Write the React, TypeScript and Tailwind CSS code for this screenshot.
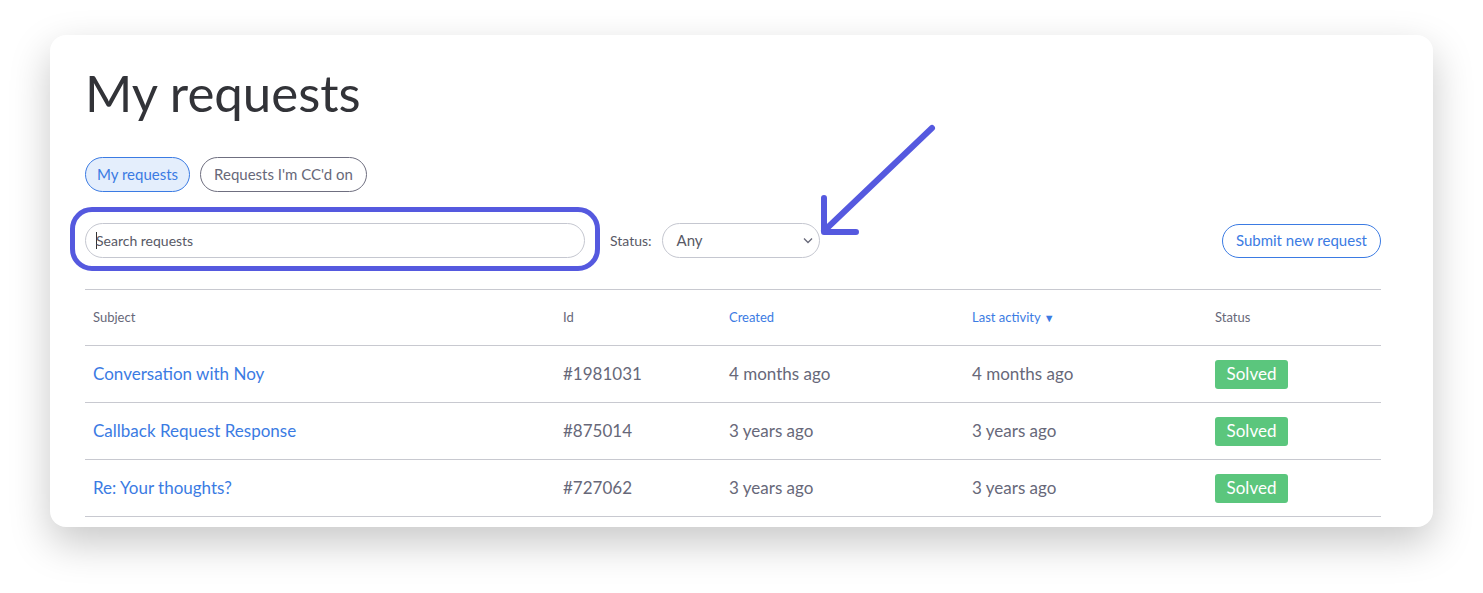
import React from "react";

const rows = [
  { subject: "Conversation with Noy", id: "#1981031", created: "4 months ago", last: "4 months ago" },
  { subject: "Callback Request Response", id: "#875014", created: "3 years ago", last: "3 years ago" },
  { subject: "Re: Your thoughts?", id: "#727062", created: "3 years ago", last: "3 years ago" },
];

const grid = "grid grid-cols-[470px_166px_243px_243px_1fr] items-center";

export default function App() {
  return (
    <div className="min-h-[593px] w-full bg-white pt-[35px] px-[50px] font-['Lato','Liberation_Sans',sans-serif]">
      <div className="relative rounded-[16px] bg-white pl-[35px] pr-[52px] pt-[28px] h-[492px] shadow-[0_16px_40px_rgba(0,0,0,0.22)]">
        <h1 className="text-[51px] leading-[60px] text-[#323338] font-normal">My requests</h1>

        <div className="mt-[34px] flex gap-[10px]">
          <button className="h-[35px] rounded-full border border-[#3b7be3] bg-[#e4eefc] px-[11px] text-[15px] text-[#3b7be3]">
            My requests
          </button>
          <button className="h-[35px] rounded-full border border-[#6f6f80] bg-white px-[13px] text-[15px] text-[#676879]">
            Requests I'm CC'd on
          </button>
        </div>

        <div className="mt-[31px] flex items-center">
          <div className="relative w-[500px]">
            <div className="pointer-events-none absolute -left-[15px] -right-[15px] -top-[16px] -bottom-[13px] rounded-[22px] border-[5px] border-[#5559df]" />
            <div className="flex h-[35px] items-center rounded-full border border-[#c5c7d0] px-[10px] text-[14px] text-[#585966]">
              <span className="mr-[-1px] inline-block h-[17px] w-[1px] bg-[#333]" />
              Search requests
            </div>
          </div>
          <span className="ml-[25px] text-[14px] text-[#585966]">Status:</span>
          <div className="ml-[10px] flex h-[35px] w-[158px] items-center justify-between rounded-full border border-[#c5c7d0] pl-[14px] pr-[6px] text-[15px] text-[#585966]">
            <span>Any</span>
            <svg width="10" height="7" viewBox="0 0 10 7" fill="none">
              <path d="M1 1.5L5 5.5L9 1.5" stroke="#676879" strokeWidth="1.3" />
            </svg>
          </div>
          <button className="ml-auto h-[34px] rounded-full border border-[#3b7be3] px-[13px] text-[15px] text-[#3b7be3]">
            Submit new request
          </button>
        </div>

        <div className="mt-[31px] border-t border-[#c8c9d0]">
          <div className={`${grid} h-[56px] border-b border-[#c8c9d0] text-[13px] text-[#676879]`}>
            <span className="pl-[8px]">Subject</span>
            <span className="pl-[8px]">Id</span>
            <span className="pl-[8px] text-[#3b7be3]">Created</span>
            <span className="pl-[8px] text-[#3b7be3]">
              Last activity <span className="text-[11px]">▼</span>
            </span>
            <span className="pl-[8px]">Status</span>
          </div>
          {rows.map((r) => (
            <div key={r.id} className={`${grid} h-[57px] border-b border-[#c8c9d0] text-[17px] text-[#676879]`}>
              <span className="pl-[8px] text-[#3b7be3]">{r.subject}</span>
              <span className="pl-[8px]">{r.id}</span>
              <span className="pl-[8px]">{r.created}</span>
              <span className="pl-[8px]">{r.last}</span>
              <span className="pl-[8px]">
                <span className="inline-flex h-[29px] w-[73px] items-center justify-center rounded-[3px] bg-[#5bc67d] text-[17px] text-white">
                  Solved
                </span>
              </span>
            </div>
          ))}
        </div>

        <svg
          className="pointer-events-none absolute left-[720px] top-[55px]"
          width="170"
          height="160"
          viewBox="770 90 170 160"
          fill="none"
        >
          <path
            d="M932 128 L824 231 M824 198 L824 232 L856 232"
            stroke="#5559df"
            strokeWidth="6"
            strokeLinecap="round"
            strokeLinejoin="round"
          />
        </svg>
      </div>
    </div>
  );
}
